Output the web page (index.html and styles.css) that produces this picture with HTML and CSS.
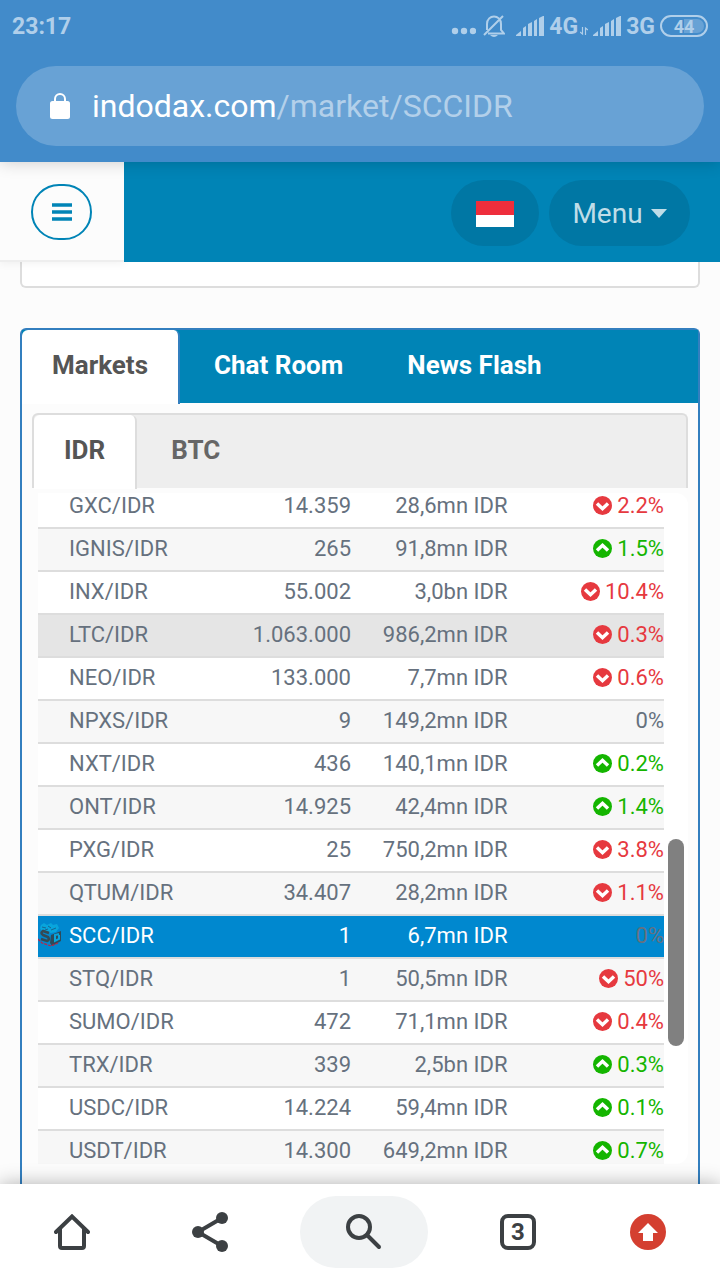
FILE: index.html
```
<!DOCTYPE html>
<html lang="en">
<head>
  <meta charset="UTF-8">
  <meta name="viewport" content="width=device-width, initial-scale=1">
  <title>SCC/IDR - indodax.com</title>
  <link rel="stylesheet" href="styles.css">
</head>
<body>

  <svg class="symbols" aria-hidden="true">
    <symbol id="signal" viewBox="0 0 28 20">
      <path d="M0 20v-1l5-4v5zM7 20v-8l3-2v10zM12 20V8l4-2v14zM18 20V5l3-2v17zM23 20V2l4-2h1v20z" fill="currentColor"/>
    </symbol>
    <symbol id="down" viewBox="0 0 20 20">
      <circle cx="10" cy="10" r="10" fill="currentColor"/>
      <path d="M4.200 7.800L10 13.400l5.800-5.600" fill="none" stroke="#fff" stroke-width="3.600"/>
    </symbol>
    <symbol id="up" viewBox="0 0 20 20">
      <circle cx="10" cy="10" r="10" fill="currentColor"/>
      <path d="M4.200 12.200L10 6.600l5.800 5.600" fill="none" stroke="#fff" stroke-width="3.600"/>
    </symbol>
  </svg>

  <div class="status-bar">
    <span class="time">23:17</span>
    <div class="status-icons">
      <svg width="25" height="20" viewBox="0 0 25 20"><g fill="currentColor"><circle cx="4" cy="15" r="3.2"/><circle cx="13" cy="15" r="3.2"/><circle cx="22" cy="15" r="3.2"/></g></svg>
      <svg class="bell" width="22" height="22" viewBox="0 0 22 22"><path d="M4 15V9c0-10 14-10 14 0v6l3 3.500H5M20 1L1 20" fill="none" stroke="currentColor" stroke-width="2"/><path d="M7 20h8q-4 4-8 0z" fill="currentColor"/></svg>
      <svg width="28" height="20"><use href="#signal"/></svg>
      <span>4G</span>
      <svg class="data" width="8" height="20" viewBox="0 0 8 20"><path d="M2.500 11v7L0 16M5.500 19v-7L8 14" fill="none" stroke="currentColor" stroke-width="1.200"/></svg>
      <svg width="28" height="20"><use href="#signal"/></svg>
      <span>3G</span>
      <span class="battery">44</span>
    </div>
  </div>

  <div class="address-bar">
    <button class="address" type="button">
      <svg width="20" height="26" viewBox="0 0 20 26"><rect y="8" width="20" height="18" rx="2.500" fill="#fff"/><path d="M5 9V6a5 5 0 0 1 10 0v3" fill="none" stroke="#fff" stroke-width="2"/></svg>
      <span>indodax.com<span class="path">/market/SCCIDR</span></span>
    </button>
  </div>

  <header class="site-header">
    <div class="side">
      <button class="toggle" type="button" aria-label="Toggle sidebar">
        <svg width="22" height="18" viewBox="0 0 22 18"><path d="M1 2h20M1 9h20M1 16h20" stroke="currentColor" stroke-width="3.400"/></svg>
      </button>
    </div>
    <div class="header-buttons">
      <button class="pill flag-button" type="button" aria-label="Language"><span class="flag"></span></button>
      <button class="pill menu-button" type="button">Menu <span class="caret"></span></button>
    </div>
  </header>

  <main>
    <div class="card-end"></div>

    <section class="panel">
      <nav class="tabs">
        <a class="active" href="#markets">Markets</a>
        <a href="#chat">Chat Room</a>
        <a href="#news">News Flash</a>
      </nav>

      <nav class="sub-tabs">
        <a class="active" href="#idr">IDR</a>
        <a href="#btc">BTC</a>
      </nav>

      <div class="market-list">
        <table>
          <tr><td>GXC/IDR</td><td>14.359</td><td>28,6mn IDR</td><td class="red"><svg><use href="#down"/></svg>2.2%</td></tr>
          <tr><td>IGNIS/IDR</td><td>265</td><td>91,8mn IDR</td><td class="green"><svg><use href="#up"/></svg>1.5%</td></tr>
          <tr><td>INX/IDR</td><td>55.002</td><td>3,0bn IDR</td><td class="red"><svg><use href="#down"/></svg>10.4%</td></tr>
          <tr class="hover"><td>LTC/IDR</td><td>1.063.000</td><td>986,2mn IDR</td><td class="red"><svg><use href="#down"/></svg>0.3%</td></tr>
          <tr><td>NEO/IDR</td><td>133.000</td><td>7,7mn IDR</td><td class="red"><svg><use href="#down"/></svg>0.6%</td></tr>
          <tr><td>NPXS/IDR</td><td>9</td><td>149,2mn IDR</td><td>0%</td></tr>
          <tr><td>NXT/IDR</td><td>436</td><td>140,1mn IDR</td><td class="green"><svg><use href="#up"/></svg>0.2%</td></tr>
          <tr><td>ONT/IDR</td><td>14.925</td><td>42,4mn IDR</td><td class="green"><svg><use href="#up"/></svg>1.4%</td></tr>
          <tr><td>PXG/IDR</td><td>25</td><td>750,2mn IDR</td><td class="red"><svg><use href="#down"/></svg>3.8%</td></tr>
          <tr><td>QTUM/IDR</td><td>34.407</td><td>28,2mn IDR</td><td class="red"><svg><use href="#down"/></svg>1.1%</td></tr>
          <tr class="selected">
            <td>
              <svg class="coin" viewBox="0 0 24 24">
                <path d="M3 2l3-2 3 2 4-2 2 2 4-1 2 4-3 4-5 1-5-2-5-1-1-2z" fill="#08a5dc"/>
                <path d="M4 4l4 1M10 3l3 2M13 7l5-2M7 7l3-1" stroke="#176591" stroke-width="1"/>
                <path d="M13 12l10-4v10l-9 5-2-3z" fill="#2d4b5b"/>
                <path d="M11 10L5 8q-3 2 0 4l5 2q2 3-1 4l-6-2" fill="none" stroke="#344a55" stroke-width="2.600"/>
                <path d="M21 11l-4 1v6l4-2v-4" fill="none" stroke="#08a5dc" stroke-width="2"/>
                <path d="M0 16l4 4 9 3 7-3" fill="none" stroke="#b82748" stroke-width="1.300" stroke-dasharray="3 1"/>
              </svg>SCC/IDR</td><td>1</td><td>6,7mn IDR</td><td>0%</td>
          </tr>
          <tr><td>STQ/IDR</td><td>1</td><td>50,5mn IDR</td><td class="red"><svg><use href="#down"/></svg>50%</td></tr>
          <tr><td>SUMO/IDR</td><td>472</td><td>71,1mn IDR</td><td class="red"><svg><use href="#down"/></svg>0.4%</td></tr>
          <tr><td>TRX/IDR</td><td>339</td><td>2,5bn IDR</td><td class="green"><svg><use href="#up"/></svg>0.3%</td></tr>
          <tr><td>USDC/IDR</td><td>14.224</td><td>59,4mn IDR</td><td class="green"><svg><use href="#up"/></svg>0.1%</td></tr>
          <tr><td>USDT/IDR</td><td>14.300</td><td>649,2mn IDR</td><td class="green"><svg><use href="#up"/></svg>0.7%</td></tr>
        </table>
        <div class="scroll-track"><div class="scroll-thumb"></div></div>
      </div>
    </section>
  </main>

  <nav class="bottom-bar">
    <button type="button" aria-label="Home">
      <svg width="36" height="36" viewBox="0 0 36 36"><path d="M2 18L18 2.500 34 18M6 15v17q0 2 2 2h20q2 0 2-2V15" fill="none" stroke="currentColor" stroke-width="4" stroke-linecap="round"/></svg>
    </button>
    <button type="button" aria-label="Share">
      <svg width="36" height="40" viewBox="0 0 36 40"><path d="M30 6L6 20l24 14" fill="none" stroke="currentColor" stroke-width="4"/><g fill="currentColor"><circle cx="30" cy="6" r="6"/><circle cx="6" cy="20" r="6"/><circle cx="30" cy="34" r="6"/></g></svg>
    </button>
    <button class="search" type="button" aria-label="Search">
      <svg width="36" height="36" viewBox="0 0 36 36"><circle cx="13" cy="13" r="11" fill="none" stroke="currentColor" stroke-width="4"/><path d="M21 21l12 12" stroke="currentColor" stroke-width="4" stroke-linecap="round"/></svg>
    </button>
    <button type="button" aria-label="Open tabs"><span class="tab-count">3</span></button>
    <button class="update" type="button" aria-label="Update">
      <svg width="36" height="36" viewBox="0 0 36 36"><circle cx="18" cy="18" r="18" fill="#d43f30"/><path d="M18 9l10 10h-5v8H13v-8H8z" fill="#fff"/></svg>
    </button>
  </nav>

</body>
</html>
```
FILE: styles.css
```
* {
  box-sizing: border-box;
}

body {
  margin: 0;
  height: 100vh;
  display: flex;
  flex-direction: column;
  overflow: hidden;
  background-color: #fcfcfc;
  font-family: Roboto, sans-serif;
  font-size: 22px;
  color: #66717e;
}

button {
  border: none;
  padding: 0;
  font-family: inherit;
  cursor: pointer;
}

a {
  text-decoration: none;
}

svg {
  flex: none;
}

.symbols {
  position: absolute;
  width: 0;
  height: 0;
}

/* phone status bar */
.status-bar {
  display: flex;
  justify-content: space-between;
  align-items: center;
  height: 52px;
  padding: 0 12px;
  background-color: #428bca;
  color: #b0cfea;
  font-size: 23px;
  font-weight: 700;
  position: relative;
  z-index: 3;
}

.status-icons {
  display: flex;
  align-items: center;
  gap: 5px;
}

.bell {
  margin: 0 6px 0 2px;
}

.data {
  margin-left: -3px;
}

.battery {
  width: 48px;
  height: 22px;
  border: 2px solid #b0cfea;
  border-radius: 11px;
  background: linear-gradient(90deg, #428bca 50%, #68a2d5 50%);
  background-clip: content-box;
  padding: 2px;
  font-size: 18px;
  font-weight: 700;
  line-height: 15px;
  text-align: center;
}

/* address bar */
.address-bar {
  padding: 14px 16px 16px;
  background-color: #428bca;
  box-shadow: 0 0 16px rgba(0, 0, 0, 0.2);
  position: relative;
  z-index: 2;
}

.address {
  display: flex;
  align-items: center;
  gap: 22px;
  width: 100%;
  height: 80px;
  padding: 0 34px;
  border-radius: 40px;
  background-color: #68a2d5;
  color: #fff;
  font-size: 32px;
}

.path {
  color: #b3d0ea;
}

/* site header */
.site-header {
  display: flex;
  flex: none;
  height: 100px;
  background-color: #0084b6;
  position: relative;
  z-index: 1;
}

.side {
  width: 124px;
  padding: 22px 0 0 31px;
  background-color: #fcfcfc;
  border-bottom: 2px solid #eee;
  box-shadow: 0 2px 8px rgba(0, 0, 0, 0.05);
}

.toggle {
  display: flex;
  align-items: center;
  justify-content: center;
  width: 61px;
  height: 56px;
  border: 2px solid #0084b6;
  border-radius: 28px;
  background-color: transparent;
  color: #0084b6;
}

.header-buttons {
  flex: 1;
  display: flex;
  justify-content: flex-end;
  gap: 10px;
  padding: 18px 30px 0 0;
  background-color: #0084b6;
  position: relative;
}

.pill {
  display: flex;
  align-items: center;
  justify-content: center;
  height: 66px;
  border-radius: 33px;
  background-color: #0077a4;
  color: #bfdde8;
  font-size: 28px;
}

.flag-button {
  width: 88px;
  padding-top: 2px;
}

.flag {
  width: 38px;
  height: 26px;
  background: linear-gradient(#ee2e3c 54%, #fff 54%);
}

.menu-button {
  width: 141px;
  gap: 8px;
}

.caret {
  border: 8px solid transparent;
  border-top: 9px solid #bfdde8;
  border-bottom: none;
}

/* page content */
main {
  flex: 1;
  min-height: 0;
  display: flex;
  flex-direction: column;
  padding: 0 20px;
}

.card-end {
  flex: none;
  height: 26px;
  margin-bottom: 40px;
  border: 2px solid #ddd;
  border-top: none;
  border-radius: 0 0 6px 6px;
  background-color: #fff;
}

.panel {
  flex: 1;
  min-height: 0;
  display: flex;
  flex-direction: column;
  padding-bottom: 20px;
  border: 2px solid #337fbf;
  border-bottom: none;
  border-radius: 6px 6px 0 0;
}

.tabs,
.sub-tabs {
  display: flex;
  flex: none;
  height: 73px;
  font-size: 26px;
  font-weight: 700;
  line-height: 70px;
}

.tabs {
  background-color: #0084b6;
}

.tabs a {
  padding: 0 32px;
  color: #fff;
}

.tabs .active {
  height: 74px;
  margin-right: 2px;
  padding: 0 30px;
  border-right: 2px solid #337fbf;
  border-radius: 6px 6px 0 0;
  background-color: #fff;
  color: #555;
}

.sub-tabs {
  height: 75px;
  margin: 10px 10px 0;
  border: 2px solid #ddd;
  border-bottom: none;
  border-radius: 6px 6px 0 0;
  background-color: #eee;
}

.sub-tabs a {
  padding: 0 34px;
  color: #666;
}

.sub-tabs .active {
  height: 74px;
  padding: 0 30px;
  border-right: 2px solid #ddd;
  border-radius: 6px 6px 0 0;
  background-color: #fff;
  color: #555;
}

/* market list */
.market-list {
  flex: 1;
  min-height: 0;
  display: flex;
  align-items: flex-start;
  overflow: hidden;
  margin: 5px 10px 0 16px;
  border-radius: 0 12px 12px 0;
  background-color: #fff;
}

table {
  flex: 1;
  margin-top: -9px;
  table-layout: fixed;
  border-collapse: separate;
  border-spacing: 0;
}

td {
  width: 25%;
  height: 43px;
  padding: 0 0 2px;
  border-top: 2px solid #ddd;
  line-height: 39px;
  text-align: right;
  white-space: nowrap;
}

td:first-child {
  padding-left: 31px;
  text-align: left;
}

td svg {
  width: 19px;
  height: 19px;
  margin-right: 5px;
  vertical-align: -2px;
}

tr:nth-child(even) {
  background-color: #f7f7f7;
}

tr.hover {
  background-color: #e5e5e5;
}

tr.selected {
  background-color: #0088cf;
  color: #fff;
}

tr.selected td:last-child {
  color: #66717e;
}

td .coin {
  width: 24px;
  height: 24px;
  margin: 0 7px 0 -31px;
  vertical-align: -4px;
}

.red {
  color: #e6393f;
}

.green {
  color: #14b500;
}

.scroll-track {
  flex: none;
  width: 24px;
  align-self: stretch;
  position: relative;
}

.scroll-thumb {
  position: absolute;
  top: 346px;
  left: 4px;
  width: 16px;
  height: 207px;
  border-radius: 8px;
  background-color: #808080;
}

/* browser toolbar */
.bottom-bar {
  flex: none;
  display: flex;
  align-items: center;
  justify-content: space-between;
  height: 96px;
  padding: 0 32px 0 24px;
  background-color: #fff;
  box-shadow: 0 0 18px rgba(0, 0, 0, 0.3);
  position: relative;
  z-index: 2;
}

.bottom-bar button {
  display: flex;
  align-items: center;
  justify-content: center;
  width: 96px;
  height: 72px;
  border-radius: 36px;
  background-color: transparent;
  color: #3c4043;
}

.bottom-bar .search {
  width: 128px;
  background-color: #f1f3f4;
}

.bottom-bar .update {
  width: 80px;
}

.tab-count {
  width: 36px;
  height: 36px;
  border: 4px solid #3c4043;
  border-radius: 8px;
  font-size: 24px;
  font-weight: 700;
  line-height: 28px;
}
```
